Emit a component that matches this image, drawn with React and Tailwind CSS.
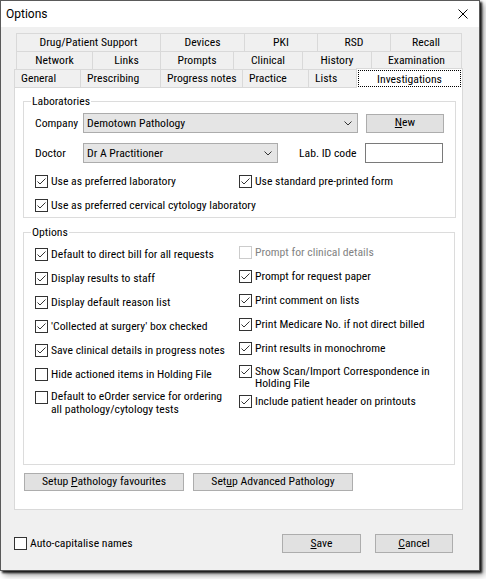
import React from 'react';

const ROW1 = [
  { label: 'Drug/Patient Support', w: 'w-[144px]' },
  { label: 'Devices', w: 'w-[84px]' },
  { label: 'PKI', w: 'w-[73px]' },
  { label: 'RSD', w: 'w-[73px]' },
  { label: 'Recall', w: 'w-[72px]' },
];

const ROW2 = [
  { label: 'Network', w: 'w-[76px]' },
  { label: 'Links', w: 'w-[68px]' },
  { label: 'Prompts', w: 'w-[73px]' },
  { label: 'Clinical', w: 'w-[69px]' },
  { label: 'History', w: 'w-[69px]' },
  { label: 'Examination', w: 'w-[91px]' },
];

const ROW3 = [
  { label: 'General', w: 'w-[66px]' },
  { label: 'Prescribing', w: 'w-[80px]' },
  { label: 'Progress notes', w: 'w-[82px]' },
  { label: 'Practice', w: 'w-[66px]' },
  { label: 'Lists', w: 'w-[48px]' },
];

const LEFT_OPTIONS = [
  { label: 'Default to direct bill for all requests', checked: true },
  { label: 'Display results to staff', checked: true },
  { label: 'Display default reason list', checked: true },
  { label: "'Collected at surgery' box checked", checked: true },
  { label: 'Save clinical details in progress notes', checked: true },
  { label: 'Hide actioned items in Holding File', checked: false },
];

const RIGHT_OPTIONS = [
  { label: 'Prompt for clinical details', checked: false, disabled: true },
  { label: 'Prompt for request paper', checked: true },
  { label: 'Print comment on lists', checked: true },
  { label: 'Print Medicare No. if not direct billed', checked: true },
  { label: 'Print results in monochrome', checked: true },
];

const Box = ({ checked, disabled }) => (
  <span
    className={`w-[13px] h-[13px] shrink-0 border bg-white flex items-center justify-center ${
      disabled ? 'border-[#cccccc]' : 'border-[#333333]'
    }`}
  >
    {checked && (
      <svg width="11" height="11" viewBox="0 0 11 11">
        <polyline points="1.5,5.5 4,8 9.5,2.5" fill="none" stroke="#333333" strokeWidth="1" />
      </svg>
    )}
  </span>
);

const CheckRow = ({ label, checked, disabled, className = '' }) => (
  <div className={`flex items-center gap-[3px] whitespace-nowrap ${className}`}>
    <Box checked={checked} disabled={disabled} />
    <span className={disabled ? 'text-[#838383]' : 'text-black'}>{label}</span>
  </div>
);

const Combo = ({ value, w }) => (
  <div className={`${w} h-[20px] bg-[#e5e5e5] border border-[#acacac] flex items-center justify-between pl-[3px] pr-[5px]`}>
    <span>{value}</span>
    <svg width="8" height="5" viewBox="0 0 8 5">
      <polyline points="0.5,0.5 4,4 7.5,0.5" fill="none" stroke="#333333" strokeWidth="1" />
    </svg>
  </div>
);

const Button = ({ w, h = 'h-[19px]', children }) => (
  <button className={`${w} ${h} bg-[#e1e1e1] border border-[#adadad] flex items-center justify-center leading-none whitespace-nowrap`}>
    {children}
  </button>
);

const Tab = ({ label, w, last, center = true }) => (
  <div
    className={`${w} h-[18px] bg-[#f0f0f0] border-t border-l border-[#d9d9d9] ${last ? 'border-r' : ''} flex items-center whitespace-nowrap ${
      center ? 'justify-center' : 'pl-[6px]'
    }`}
  >
    {label}
  </div>
);

export default function App() {
  return (
    <div className="w-[486px] h-[579px] bg-white font-['Roboto_Condensed','Roboto',sans-serif] text-[11.7px] text-black leading-[15px]">
      <div className="w-[480px] h-[571px] border border-[#5a5a5a] bg-[#f0f0f0] flex flex-col shadow-[2px_2px_2px_rgba(0,0,0,0.85),4px_4px_6px_rgba(0,0,0,0.4)]">
        {/* title bar */}
        <div className="h-[26px] bg-white flex items-center justify-between pl-[5px] pr-[11px] shrink-0">
          <span className="text-[12px] font-['Roboto',sans-serif]">Options</span>
          <svg width="10" height="10" viewBox="0 0 10 10">
            <path d="M0.5 0.5 L9.5 9.5 M9.5 0.5 L0.5 9.5" stroke="#000" strokeWidth="1" />
          </svg>
        </div>

        <div className="flex flex-col pl-[13px] pt-[6px]">
          {/* tab strip */}
          <div className="flex ml-[2px]">
            {ROW1.map((t, i) => (
              <Tab key={t.label} {...t} last={i === ROW1.length - 1} />
            ))}
          </div>
          <div className="flex ml-[2px]">
            {ROW2.map((t, i) => (
              <Tab key={t.label} {...t} last={i === ROW2.length - 1} />
            ))}
          </div>
          <div className="flex items-end -mt-px">
            {ROW3.map((t) => (
              <Tab key={t.label} {...t} center={false} />
            ))}
            <div className="relative z-10 w-[107px] h-[20px] -mb-px bg-white border border-b-0 border-[#d9d9d9] p-px">
              <div className="h-full border border-dotted border-black flex justify-center pt-[1px]">Investigations</div>
            </div>
          </div>

          {/* tab page */}
          <div className="w-[449px] h-[423px] bg-white border border-[#d9d9d9] flex flex-col px-[8px]">
            <fieldset className="mt-[6px] w-[432px] border border-[#dcdcdc] px-[11px] pb-[4px]">
              <legend className="-ml-[4px] px-px leading-[14px]">Laboratories</legend>
              <div className="flex items-center mt-[5px] whitespace-nowrap">
                <span className="w-[48px]">Company</span>
                <Combo value="Demotown Pathology" w="w-[275px]" />
                <div className="ml-[8px]">
                  <Button w="w-[78px]">
                    <u>N</u>ew
                  </Button>
                </div>
              </div>
              <div className="flex items-center mt-[10px] whitespace-nowrap">
                <span className="w-[48px]">Doctor</span>
                <Combo value="Dr A Practitioner" w="w-[195px]" />
                <span className="ml-[21px] w-[66px]">Lab. ID code</span>
                <div className="w-[78px] h-[20px] bg-white border border-[#7a7a7a]" />
              </div>
              <div className="flex mt-[10px] h-[16px] items-center">
                <CheckRow className="w-[204px]" label="Use as preferred laboratory" checked />
                <CheckRow label="Use standard pre-printed form" checked />
              </div>
              <div className="flex mt-[8px] h-[16px] items-center">
                <CheckRow label="Use as preferred cervical cytology laboratory" checked />
              </div>
            </fieldset>

            <fieldset className="mt-[7px] w-[432px] h-[240px] border border-[#dcdcdc] px-[11px]">
              <legend className="-ml-[4px] px-px leading-[14px]">Options</legend>
              <div className="flex">
                <div className="w-[204px] flex flex-col mt-[3px]">
                  {LEFT_OPTIONS.map((o) => (
                    <CheckRow key={o.label} {...o} className="h-[24px]" />
                  ))}
                  <div className="flex items-start gap-[3px] pt-[4px] whitespace-nowrap">
                    <span className="mt-[1px]">
                      <Box />
                    </span>
                    <span className="leading-[13px]">
                      Default to eOrder service for ordering
                      <br />
                      all pathology/cytology tests
                    </span>
                  </div>
                </div>
                <div className="flex flex-col mt-[1px]">
                  {RIGHT_OPTIONS.map((o) => (
                    <CheckRow key={o.label} {...o} className="h-[24px]" />
                  ))}
                  <div className="flex items-start gap-[3px] pt-[5px] h-[29px] whitespace-nowrap">
                    <Box checked />
                    <span className="leading-[12px]">
                      Show Scan/Import Correspondence in
                      <br />
                      Holding File
                    </span>
                  </div>
                  <CheckRow label="Include patient header on printouts" checked className="h-[24px]" />
                </div>
              </div>
            </fieldset>

            <div className="flex gap-[9px] mt-[8px] ml-[1px]">
              <Button w="w-[160px]" h="h-[18px]">
                Setup&nbsp;<u>P</u>athology favourites
              </Button>
              <Button w="w-[160px]" h="h-[18px]">
                Set<u>u</u>p Advanced Pathology
              </Button>
            </div>
          </div>

          {/* footer */}
          <div className="flex items-center mt-[24px] h-[19px]">
            <CheckRow className="w-[268px]" label="Auto-capitalise names" />
            <Button w="w-[79px]">
              <u>S</u>ave
            </Button>
            <div className="ml-[14px]">
              <Button w="w-[78px]">
                <u>C</u>ancel
              </Button>
            </div>
          </div>
        </div>
      </div>
    </div>
  );
}
